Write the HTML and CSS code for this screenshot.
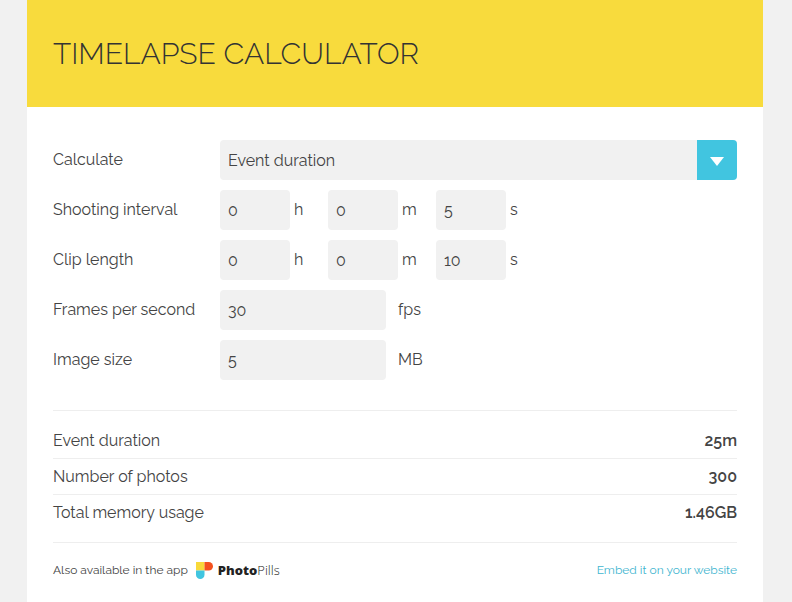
FILE: index.html
```html
<!DOCTYPE html>
<html lang="en">
<head>
  <meta charset="UTF-8">
  <meta name="viewport" content="width=device-width, initial-scale=1.0">
  <title>Timelapse Calculator</title>
  <link rel="stylesheet" href="styles.css">
</head>
<body>

<main class="calculator">
  <header class="header">
    <h1 class="title">TIMELAPSE CALCULATOR</h1>
  </header>

  <div class="content">
    <form class="form">
      <div class="row">
        <label for="calculate">Calculate</label>
        <div class="select-box">
          <select class="select" id="calculate">
            <option selected>Event duration</option>
            <option>Clip length</option>
            <option>Shooting interval</option>
          </select>
          <span class="select-arrow">
            <svg width="14" height="9" viewBox="0 0 14 9"><path d="M0 0h14L7 9z" fill="#fff"/></svg>
          </span>
        </div>
      </div>

      <div class="row">
        <label for="interval-h">Shooting interval</label>
        <div class="times">
          <div class="time"><input class="input" id="interval-h" type="text" value="0"><label for="interval-h">h</label></div>
          <div class="time"><input class="input" id="interval-m" type="text" value="0"><label for="interval-m">m</label></div>
          <div class="time"><input class="input" id="interval-s" type="text" value="5"><label for="interval-s">s</label></div>
        </div>
      </div>

      <div class="row">
        <label for="clip-h">Clip length</label>
        <div class="times">
          <div class="time"><input class="input" id="clip-h" type="text" value="0"><label for="clip-h">h</label></div>
          <div class="time"><input class="input" id="clip-m" type="text" value="0"><label for="clip-m">m</label></div>
          <div class="time"><input class="input" id="clip-s" type="text" value="10"><label for="clip-s">s</label></div>
        </div>
      </div>

      <div class="row">
        <label for="fps">Frames per second</label>
        <div class="amount"><input class="input input-wide" id="fps" type="text" value="30"><label for="fps">fps</label></div>
      </div>

      <div class="row">
        <label for="size">Image size</label>
        <div class="amount"><input class="input input-wide" id="size" type="text" value="5"><label for="size">MB</label></div>
      </div>
    </form>

    <table class="results">
      <tr><th scope="row">Event duration</th><td>25m</td></tr>
      <tr><th scope="row">Number of photos</th><td>300</td></tr>
      <tr><th scope="row">Total memory usage</th><td>1.46GB</td></tr>
    </table>

    <footer class="footer">
      <span>Also available in the app</span>
      <a class="logo" href="#">
        <svg width="17" height="17" viewBox="0 0 17 17">
          <path d="M0 0h8.500v8.500H0z" fill="#f8d93a"/>
          <path d="M8.500 0h4.250a4.250 4.250 0 0 1 0 8.500H8.500z" fill="#f4511e"/>
          <path d="M0 8.500h8.500v4.250a4.250 4.250 0 0 1-8.500 0z" fill="#41c5e0"/>
        </svg>
        <span class="logo-text"><b>Photo</b>Pills</span>
      </a>
      <a class="embed" href="#">Embed it on your website</a>
    </footer>
  </div>
</main>

</body>
</html>
```
FILE: styles.css
```css
* {
  box-sizing: border-box;
}
body {
  margin: 0;
  background: #f1f1f1;
  color: #444;
  font-family: Raleway, Lato, sans-serif;
  font-size: 16px;
  line-height: 24px;
}
.calculator {
  min-height: 100vh;
  margin: 0 29px 0 27px;
  background: #fff;
}
.header {
  padding: 34px 26px 33px;
  background: #f8db3d;
}
.title {
  margin: 0;
  color: #333;
  font-size: 30px;
  font-weight: 300;
  line-height: 40px;
}
.content {
  padding: 33px 26px 20px;
}
.form {
  display: grid;
  gap: 10px;
}
.row {
  display: grid;
  grid-template-columns: 167px 1fr;
  align-items: center;
}
.select-box {
  display: grid;
  grid-template-columns: 1fr 40px;
}
.select, .input {
  height: 40px;
  padding: 0 8px;
  border: 0;
  background: #f1f1f1;
  color: #444;
  font: inherit;
}
.select {
  grid-area: 1 / 1 / 2 / 3;
  padding-top: 2px;
  appearance: none;
  border-radius: 4px;
}
.select-arrow {
  grid-area: 1 / 2;
  display: flex;
  align-items: center;
  justify-content: center;
  padding-top: 2px;
  border-radius: 0 4px 4px 0;
  background: #41c5e0;
  pointer-events: none;
}
.times {
  display: flex;
}
.time {
  display: flex;
  align-items: center;
  gap: 4px;
  width: 108px;
}
.input {
  width: 70px;
  border-radius: 4px;
}
.amount {
  display: flex;
  align-items: center;
  gap: 12px;
}
.input-wide {
  width: 166px;
}
.results {
  width: 100%;
  margin-top: 30px;
  padding: 12px 0 11px;
  border: solid #eee;
  border-width: 1px 0;
  border-spacing: 0;
}
.results th, .results td {
  height: 36px;
  padding: 0;
  border-bottom: 1px solid #eee;
}
.results th {
  font-weight: 400;
  text-align: left;
}
.results td {
  font-weight: 600;
  text-align: right;
}
.results tr:last-child th, .results tr:last-child td {
  border-bottom: 0;
}
.footer {
  display: flex;
  align-items: center;
  gap: 8px;
  padding-top: 15px;
  font-size: 12px;
}
.logo {
  display: flex;
  align-items: center;
  gap: 5px;
  color: #222;
  text-decoration: none;
}
.logo-text {
  font-family: "Open Sans", "Noto Sans", sans-serif;
  font-size: 13px;
  font-weight: 300;
}
.logo-text b {
  font-weight: 800;
}
.embed {
  margin-left: auto;
  color: #41b5cf;
  text-decoration: none;
}
```
